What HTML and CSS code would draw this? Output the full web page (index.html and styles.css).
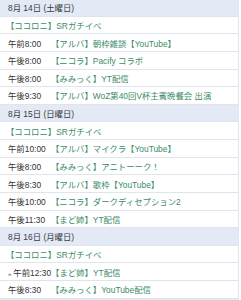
FILE: index.html
```html
<!DOCTYPE html>
<html lang="ja">
<head>
<meta charset="utf-8">
<link rel="stylesheet" href="styles.css">
</head>
<body>
<div class="schedule">
  <div class="day">8月 14日 (土曜日)</div>
  <div class="row"><span class="title allday">【ココロニ】SRガチイベ</span></div>
  <div class="row"><span class="time">午前8:00</span><span class="title">【アルバ】朝枠雑談【YouTube】</span></div>
  <div class="row"><span class="time">午後8:00</span><span class="title">【ニコラ】Pacify コラボ</span></div>
  <div class="row"><span class="time">午後8:00</span><span class="title">【みみっく】YT配信</span></div>
  <div class="row"><span class="time">午後9:30</span><span class="title">【アルバ】WoZ第40回V杯主賓晩餐会 出演</span></div>
  <div class="day">8月 15日 (日曜日)</div>
  <div class="row"><span class="title allday">【ココロニ】SRガチイベ</span></div>
  <div class="row"><span class="time">午前10:00</span><span class="title">【アルバ】マイクラ【YouTube】</span></div>
  <div class="row"><span class="time">午後8:00</span><span class="title">【みみっく】アニトーーク！</span></div>
  <div class="row"><span class="time">午後8:30</span><span class="title">【アルバ】歌枠【YouTube】</span></div>
  <div class="row"><span class="time">午後10:00</span><span class="title">【ニコラ】ダークディセプション2</span></div>
  <div class="row"><span class="time">午後11:30</span><span class="title">【まど姉】YT配信</span></div>
  <div class="day">8月 16日 (月曜日)</div>
  <div class="row"><span class="title allday">【ココロニ】SRガチイベ</span></div>
  <div class="row"><span class="time"><span class="mark">»</span>午前12:30</span><span class="title">【まど姉】YT配信</span></div>
  <div class="row"><span class="time">午後8:30</span><span class="title">【みみっく】YouTube配信</span></div>
  <div class="day"></div>
</div>
</body>
</html>
```

FILE: styles.css
```css
html, body {
  margin: 0;
  padding: 0;
  background: #ffffff;
}
body {
  font-family: "Liberation Sans", "Noto Sans CJK JP", sans-serif;
  font-size: 8.4px;
  color: #333333;
  overflow: hidden;
}
.schedule {
  width: 238px;
  margin-top: -1px;
  border-right: 1px solid #e2e7ef;
  display: flex;
  flex-direction: column;
}
.day, .row {
  height: 16.64px;
  flex: 0 0 auto;
  border-bottom: 1px solid #dfe5ee;
  display: flex;
  align-items: center;
  white-space: nowrap;
  overflow: hidden;
}
.day {
  background: #e3eaf6;
  padding-left: 8px;
  color: #3a3a3a;
}
.row {
  background: #ffffff;
}
.time {
  flex: 0 0 43px;
  padding-left: 8px;
  color: #333333;
}
.mark {
  font-size: 6px;
  margin-right: 2px;
  color: #555555;
}
.title {
  color: #3b8b68;
}
.title.allday {
  padding-left: 6px;
}
```
